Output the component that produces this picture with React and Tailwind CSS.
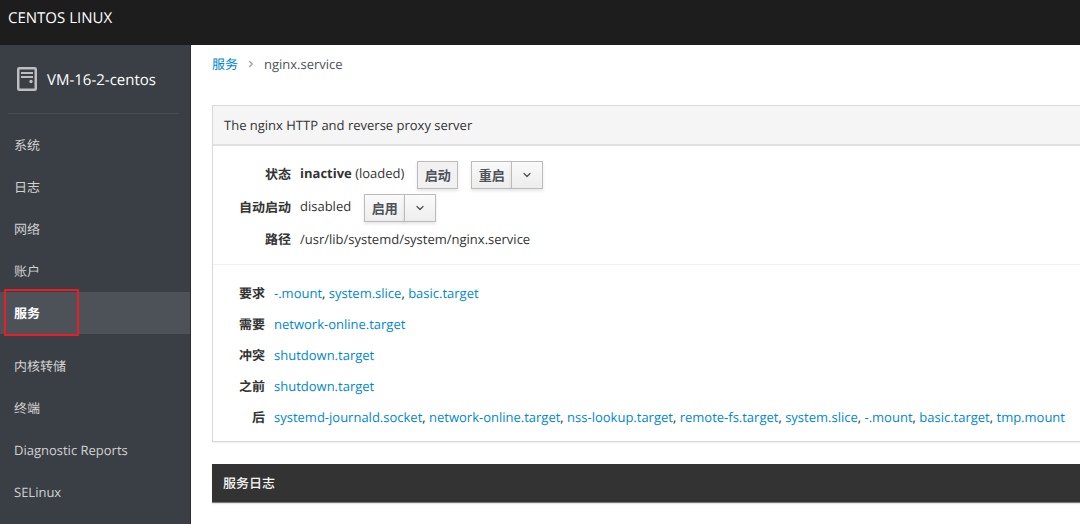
import React from 'react';
import { ChevronDown, ChevronRight } from 'lucide-react';

const menuGroups = [
  ['系统', '日志', '网络', '账户', '服务'],
  ['内核转储', '终端', 'Diagnostic Reports', 'SELinux'],
];

const relations = [
  { label: '要求', units: ['-.mount', 'system.slice', 'basic.target'] },
  { label: '需要', units: ['network-online.target'] },
  { label: '冲突', units: ['shutdown.target'] },
  { label: '之前', units: ['shutdown.target'] },
  {
    label: '后',
    units: [
      'systemd-journald.socket',
      'network-online.target',
      'nss-lookup.target',
      'remote-fs.target',
      'system.slice',
      '-.mount',
      'basic.target',
      'tmp.mount',
    ],
  },
];

const buttonClass =
  'h-7 border border-[#bbb] pb-px font-semibold text-[#4d5258] shadow-[0_2px_3px_rgba(3,3,3,0.1)]';

const ServerIcon = () => (
  <svg className="h-6 w-5 shrink-0" viewBox="0 0 20 24" fill="none" stroke="#bcbec0" strokeWidth="2" aria-hidden="true">
    <rect x="1.25" y="1.25" width="17.5" height="21.5" rx="1" strokeWidth="2.5" />
    <path d="M4 6h12M4 10h12" />
    <circle cx="14" cy="14.5" r="1.7" fill="#bcbec0" stroke="none" />
  </svg>
);

const SplitButton = ({ label }) => (
  <div className="flex">
    <button type="button" className={`${buttonClass} w-[41px] bg-linear-to-b from-[#fafafa] to-[#ededed]`}>
      {label}
    </button>
    <button
      type="button"
      aria-label={`${label} 选项`}
      className={`${buttonClass} -ml-px flex w-8 items-center justify-center bg-linear-to-b from-[#fafafa] to-[#ededed]`}
    >
      <ChevronDown size={12} strokeWidth={2.5} />
    </button>
  </div>
);

const Sidebar = () => (
  <nav className="w-[191px] shrink-0 border-r border-[#292e34] bg-[#393f45] text-[#d1d1d1]">
    <div className="mr-[11px] ml-2 flex h-[69px] items-center gap-[10px] border-b border-[#474c54] pl-[9px]">
      <ServerIcon />
      <span className="pt-px text-[15px] text-white">VM-16-2-centos</span>
    </div>
    <div className="flex flex-col gap-[11px] pt-[10px]">
      {menuGroups.map((items) => (
        <ul key={items[0]}>
          {items.map((item) => {
            const active = item === '服务';
            return (
              <li key={item} className="relative">
                <a
                  href="#"
                  className={`flex h-[42px] items-center pl-[14px] ${active ? 'bg-[#4d5258] font-bold text-white' : ''}`}
                >
                  {item}
                </a>
                {active && <span className="absolute -top-[3px] left-1 h-[47px] w-[75px] border-2 border-[#ed1c24]" />}
              </li>
            );
          })}
        </ul>
      ))}
    </div>
  </nav>
);

const App = () => {
  return (
    <div className="flex min-h-screen flex-col overflow-x-hidden bg-white font-['Open_Sans','Noto_Sans_CJK_SC',sans-serif] text-[13px] leading-5 text-[#333] [text-rendering:geometricPrecision]">
      <header className="h-[45px] bg-[#1d1d1d] px-2 pt-2 text-[15px] text-white">CENTOS LINUX</header>
      <div className="flex flex-1">
        <Sidebar />
        <main className="min-w-0 flex-1 pl-[21px]">
          <nav className="flex items-center gap-2 pt-[9px] text-[#4d5258]">
            <a href="#" className="text-[#0088ce]">服务</a>
            <ChevronRight size={10} strokeWidth={3} className="text-[#9c9c9c]" />
            <span>nginx.service</span>
          </nav>

          <section className="mt-[31px] border border-r-0 border-[#d9d9d9] shadow-[0_1px_1px_rgba(0,0,0,0.05)]">
            <h1 className="border-b-2 border-[#e0e0e0] bg-[#f5f5f5] px-[11px] py-[9px]">
              The nginx HTTP and reverse proxy server
            </h1>
            <dl className="grid grid-cols-[auto_1fr] gap-x-[9px] gap-y-[5px] border-b border-[#f1f1f1] pt-[15px] pb-[15px] pl-[26px]">
              <dt className="pt-[3px] text-right font-semibold">状态</dt>
              <dd className="flex gap-[13px]">
                <span className="pt-[2px]"><b className="font-bold">inactive</b> (loaded)</span>
                <button type="button" className={`${buttonClass} w-[41px] bg-[#f1f1f1]`}>启动</button>
                <SplitButton label="重启" />
              </dd>
              <dt className="pt-[3px] text-right font-semibold">自动启动</dt>
              <dd className="flex gap-[13px]">
                <span className="pt-[2px]">disabled</span>
                <SplitButton label="启用" />
              </dd>
              <dt className="pt-[2px] text-right font-semibold">路径</dt>
              <dd className="pt-[2px]">/usr/lib/systemd/system/nginx.service</dd>
            </dl>
            <dl className="grid grid-cols-[auto_1fr] gap-x-[9px] gap-y-[11px] pt-[18px] pb-[14px] pl-[26px]">
              {relations.map(({ label, units }) => (
                <React.Fragment key={label}>
                  <dt className="text-right font-semibold">{label}</dt>
                  <dd>
                    {units.map((unit, i) => (
                      <React.Fragment key={unit}>
                        {i > 0 && ', '}
                        <a href="#" className="text-[#0088ce]">{unit}</a>
                      </React.Fragment>
                    ))}
                  </dd>
                </React.Fragment>
              ))}
            </dl>
          </section>

          <h2 className="mt-[22px] border-b border-[#777] bg-[#333] px-[11px] py-[9px] font-medium text-[#f5f5f5] shadow-[0_1px_1px_rgba(0,0,0,0.1)]">
            服务日志
          </h2>
        </main>
      </div>
    </div>
  );
};

export default App;
